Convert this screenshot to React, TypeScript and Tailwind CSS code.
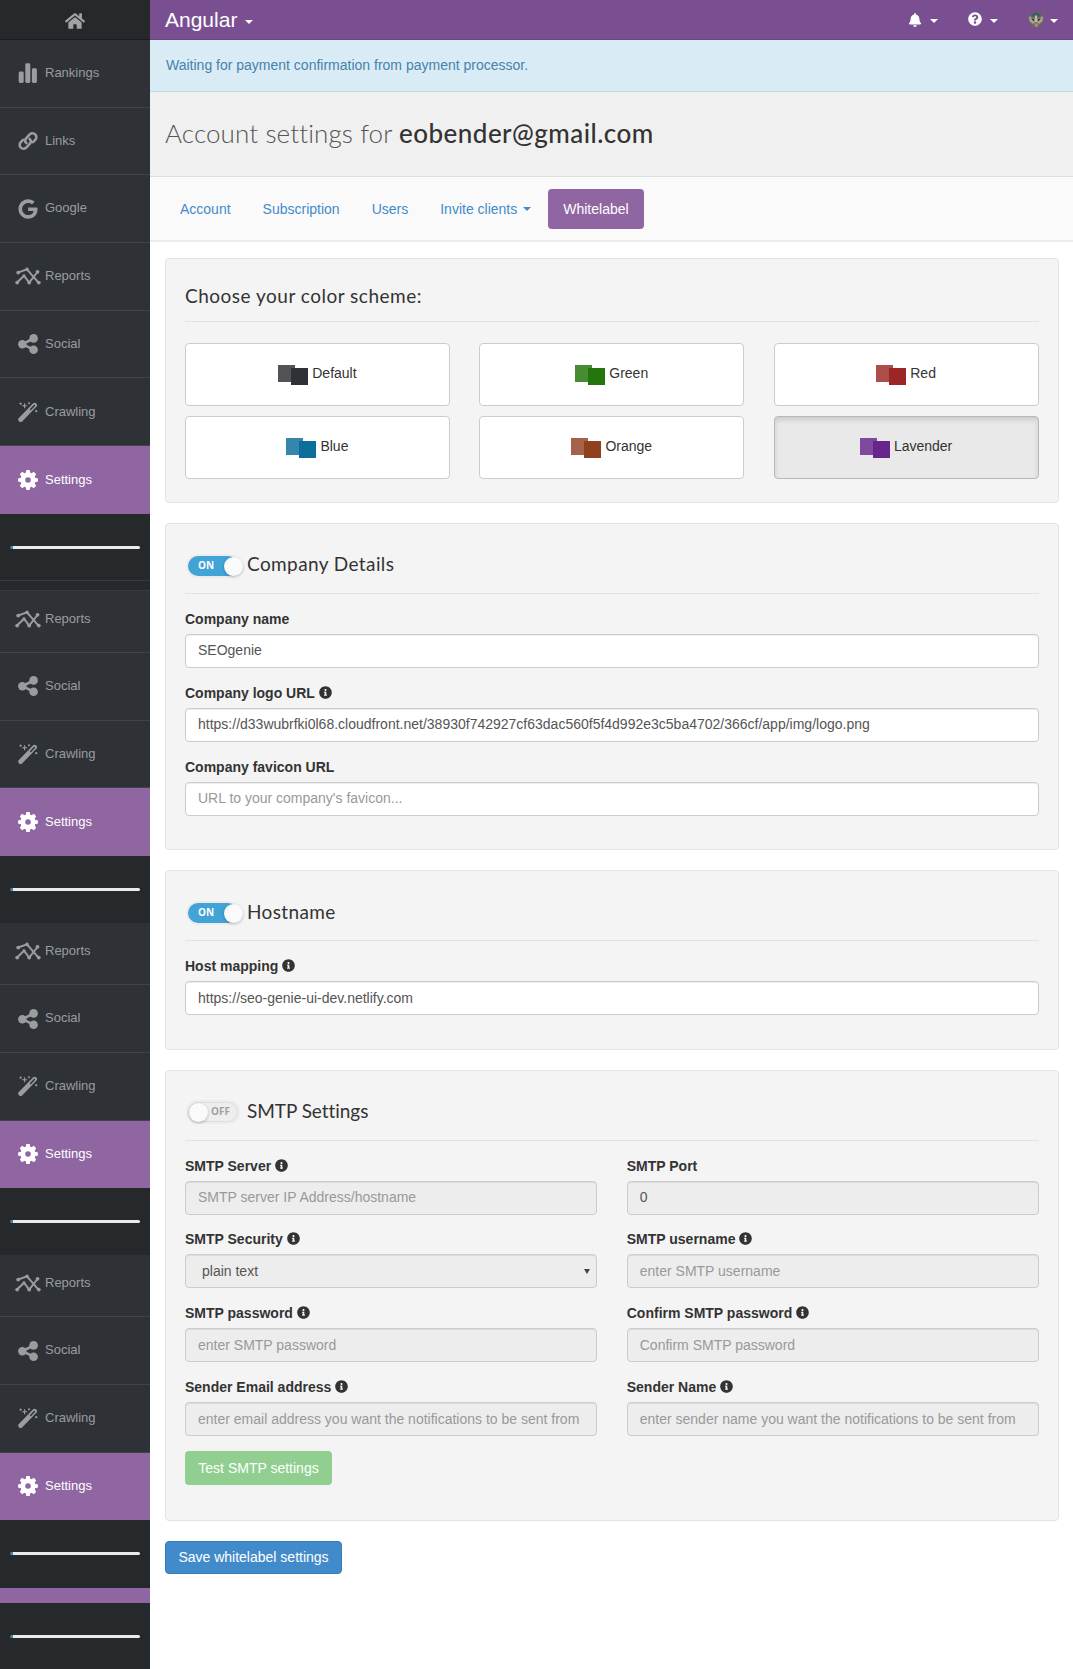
import React from "react";
import { FaHome, FaBell, FaQuestionCircle, FaInfoCircle, FaGoogle } from "react-icons/fa";

const sans = "font-['Liberation_Sans',Arial,sans-serif]";
const head = "font-[Lato,'Open_Sans',sans-serif]";

function Caret({ cls = "" }: { cls?: string }) {
  return <span className={`inline-block h-0 w-0 border-x-4 border-t-4 border-x-transparent border-t-current ${cls}`} />;
}

function RankIcon() {
  return (
    <svg width="20" height="20" viewBox="0 0 20 20" fill="currentColor">
      <rect x="0.7" y="8.5" width="5" height="11.5" rx="1.4" />
      <rect x="7.3" y="0.3" width="5" height="19.7" rx="1.4" />
      <rect x="13.9" y="5.3" width="5" height="14.7" rx="1.4" />
    </svg>
  );
}

function LinkIcon() {
  return (
    <svg width="20" height="20" viewBox="0 0 20 20" fill="none" stroke="currentColor" strokeWidth="2.6" strokeLinecap="round">
      <path d="M8.4 12.1c-1.6-1.5-1.5-3.500-.1-5l3.600-3.900a3.900 3.900 0 0 1 5.500 5.500L15 11.2" />
      <path d="M11.6 7.900c1.600 1.500 1.500 3.500.1 5l-3.600 3.900a3.900 3.900 0 0 1-5.500-5.500L5 8.800" />
    </svg>
  );
}

function ReportIcon() {
  return (
    <svg width="26" height="18" viewBox="0 0 26 18" fill="none" stroke="currentColor" strokeWidth="2">
      <path d="M3 5.5 12 2.4 23.5 15.7M2.3 15.3 9 8.7 14.2 15.5 22.5 5" />
      <g fill="currentColor" stroke="none">
        <circle cx="3.2" cy="5.6" r="1.9" />
        <circle cx="12" cy="2.4" r="1.8" />
        <circle cx="23.8" cy="15.6" r="1.9" />
        <circle cx="2.2" cy="15.6" r="1.9" />
        <circle cx="9" cy="8.9" r="1.6" />
        <circle cx="14.2" cy="15.6" r="1.9" />
        <circle cx="22.5" cy="4.8" r="1.9" />
      </g>
    </svg>
  );
}

function ShareIcon() {
  return (
    <svg width="20" height="20" viewBox="0 0 20 20" fill="currentColor">
      <path d="M4.3 10.2 15.6 4.5M4.3 10.2l11.3 5.5" stroke="currentColor" strokeWidth="2.6" />
      <circle cx="4.3" cy="10.2" r="4.2" />
      <circle cx="15.6" cy="4.4" r="4.3" />
      <circle cx="15.6" cy="15.7" r="4.3" />
    </svg>
  );
}

function WandIcon() {
  return (
    <svg width="20" height="20" viewBox="0 0 20 20" fill="none" stroke="currentColor">
      <path d="M2.6 17.6 16.6 3.2" strokeWidth="4.8" strokeLinecap="round" />
      <path d="M12.6 7.4 16.4 3.5" stroke="#2e3236" strokeWidth="1.5" strokeLinecap="round" />
      <path d="M6.6 1.2v5M4.1 3.7h5M2.6.5v2.2M1.5 1.6h2.2M11 .3v2M10 1.3h2M18.2 8v2.2M17.1 9.1h2.2" strokeWidth="1.1" />
    </svg>
  );
}

const teeth = [0, 45, 90, 135];

function GearIcon() {
  return (
    <svg width="20" height="20" viewBox="-10 -10 20 20" fill="none" stroke="currentColor">
      <circle r="5.1" strokeWidth="4.6" />
      {teeth.map((t) => (
        <g key={t} transform={`rotate(${t})`} fill="currentColor" stroke="none">
          <path d="M-2.5-6.4-1.6-9.9h3.2l.9 3.5zM-2.5 6.4-1.6 9.9h3.2l.9-3.5z" />
        </g>
      ))}
    </svg>
  );
}

const icons: Record<string, React.ReactNode> = {
  Rankings: <RankIcon />,
  Links: <LinkIcon />,
  Google: <FaGoogle size={20} />,
  Reports: <ReportIcon />,
  Social: <ShareIcon />,
  Crawling: <WandIcon />,
  Settings: <GearIcon />,
};

function Item({ name, cls = "h-[67.7px]" }: { name: string; cls?: string }) {
  const on = name === "Settings";
  return (
    <div className={`flex shrink-0 flex-col justify-end overflow-hidden ${cls} ${on ? "bg-[#8f66a1] text-white" : "border-b border-[#404447] bg-[#2e3236] text-[#9a9c9e]"}`}>
      <div className={`flex shrink-0 items-center ${on ? "h-[67.7px]" : "h-[66.7px]"}`}>
        <span className="ml-[14px] flex w-[27px] justify-center">{icons[name]}</span>
        <span className="ml-1 -mt-px text-[13px]">{name}</span>
      </div>
    </div>
  );
}

function Dark({ cls }: { cls: string }) {
  return (
    <div className={`shrink-0 bg-[#25292c] ${cls}`}>
      <div className="mt-[32px] ml-[10px] h-[3px] w-[130px] rounded-sm border-l-[3px] border-[#4a7fa6] bg-[#e8ebed]" />
    </div>
  );
}

function Group({ first }: { first: string }) {
  return (
    <>
      <Item name="Reports" cls={first} />
      <Item name="Social" />
      <Item name="Crawling" />
      <Item name="Settings" />
    </>
  );
}

function Toggle({ on }: { on: boolean }) {
  return (
    <span className="ml-[3px] flex w-[56px] shrink-0">
      <span className={`flex h-5 w-[50px] items-center rounded-full text-[10px] shadow-[0_0_0_2px_#ececec] ${on ? "bg-[#41a3d6] text-white" : "flex-row-reverse border border-[#dedede] bg-[#eeeeee] text-[#a0a0a0]"}`}>
        <span className={`-mt-px text-center font-['Open_Sans',sans-serif] font-bold ${on ? "w-[36px]" : "w-[33px] pr-1"}`}>{on ? "ON" : "OFF"}</span>
        <span className={`h-[19px] w-[19px] shrink-0 rounded-full bg-[#fafafa] shadow-[0_1px_3px_rgba(0,0,0,0.25)] ${on ? "-mr-[5px]" : ""}`} />
      </span>
    </span>
  );
}

function Panel({ title, toggle, cls, bar, track, children }: { title: string; toggle?: boolean; cls: string; bar: string; track: string; children: React.ReactNode }) {
  return (
    <section className={`shrink-0 rounded border border-[#e3e3e3] bg-[#f4f4f4] px-[19px] ${cls}`}>
      <div className={`flex items-center border-b border-[#e2e2e2] ${bar}`}>
        {toggle !== undefined && <span className="mt-[3px] flex"><Toggle on={toggle} /></span>}
        <h2 className={`${head} text-[19px] text-[#333] ${track} ${toggle === undefined ? "" : "ml-[3px]"}`}>{title}</h2>
      </div>
      {children}
    </section>
  );
}

function Field({ label, info, value, ph, disabled, select }: { label: string; info?: boolean; value?: string; ph?: string; disabled?: boolean; select?: boolean }) {
  return (
    <div className="h-[73.9px] min-w-0">
      <div className="flex h-[25px] items-start gap-1 text-sm font-bold text-[#333]">
        <span>{label}</span>
        {info && <FaInfoCircle size={13} className="mt-[3px]" />}
      </div>
      <div className={`flex h-[34px] items-center justify-between rounded border border-[#ccc] pl-3 text-sm whitespace-nowrap shadow-[inset_0_1px_1px_rgba(0,0,0,0.075)] ${disabled ? "bg-[#ededed]" : "bg-white"} ${value ? "text-[#555]" : "text-[#999]"}`}>
        <span className={`-mt-px ${select ? "pl-1" : ""}`}>{value || ph}</span>
        {select && <span className="mr-[6px] border-x-[3px] border-t-[5px] border-x-transparent border-t-[#444]" />}
      </div>
    </div>
  );
}

function Scheme({ name, a, b, on }: { name: string; a: string; b: string; on?: boolean }) {
  return (
    <button className={`flex h-[63px] items-center justify-center rounded border pt-0.5 text-sm text-[#333] ${on ? "border-[#b8b8b8] bg-[#e9e9e9] shadow-[inset_0_3px_5px_rgba(0,0,0,0.125)]" : "border-[#ccc] bg-white"}`}>
      <span className="mr-1 flex">
        <span className={`h-[17px] w-[17px] ${a}`} />
        <span className={`-ml-1 mt-[3px] h-[17px] w-[17px] ${b}`} />
      </span>
      <span className="-mt-1">{name}</span>
    </button>
  );
}

function Avatar() {
  return (
    <svg width="16" height="17" viewBox="0 0 16 17">
      <ellipse cx="8" cy="8.3" rx="7.8" ry="7.8" fill="#6d675f" />
      <path d="M2.5 3.5 8 .8l5.5 2.7-1.5 2H4z" fill="#3e5f66" />
      <path d="M1 5l5 3 1 3-2 2-3.5-3zM15 5l-5 3-1 3 2 2 3.5-3z" fill="#a9a799" />
      <path d="M3 7l3.500 1.500L5.500 10.500zM13 7l-3.500 1.500 1 2z" fill="#33302c" />
      <path d="M7 4.5h2l.4 5L8 12 6.6 9.5z" fill="#bfbcae" />
      <path d="M6 12.5h4.500L9.500 16h-2z" fill="#a39177" />
    </svg>
  );
}

export default function App() {
  return (
    <div className={`flex h-[1669px] w-[1073px] overflow-hidden bg-white ${sans}`}>
      <aside className="flex w-[150px] shrink-0 flex-col bg-[#25292c]">
        <div className="flex h-10 shrink-0 items-center justify-center border-b border-[#1b1e20] text-[#a0a2a4]"><FaHome size={20} className="mt-0.5" /></div>
        {["Rankings", "Links", "Google", "Reports", "Social", "Crawling", "Settings"].map((n) => <Item key={n} name={n} />)}
        <Dark cls="h-[67.6px] border-b border-[#383c3f]" />
        <div className="h-[10px] shrink-0 border-b border-[#383c3f]" />
        <Group first="h-[61.7px]" />
        <Dark cls="h-[67px]" />
        <Group first="h-[62px]" />
        <Dark cls="h-[67px]" />
        <Group first="h-[62px]" />
        <Dark cls="h-[67.6px]" />
        <div className="h-[15px] shrink-0 bg-[#8f66a1]" />
        <Dark cls="h-[68px]" />
      </aside>
      <div className="flex min-w-0 flex-1 flex-col">
        <header className="flex h-10 shrink-0 items-center border-b border-[#6d4583] bg-[#7a4f92] pl-[15px] pr-[15px] text-white">
          <span className="text-[21px]">Angular</span>
          <Caret cls="ml-2 mt-1" />
          <span className="ml-auto flex items-center"><FaBell size={14} /><Caret cls="ml-2 mt-0.5" /></span>
          <span className="ml-[29.5px] flex items-center"><FaQuestionCircle size={14} className="-mt-0.5" /><Caret cls="ml-[8.5px] mt-0.5" /></span>
          <span className="ml-[30px] flex items-center"><Avatar /><Caret cls="ml-[6px] mt-0.5" /></span>
        </header>
        <div className="flex h-[52px] shrink-0 items-center border-b border-[#bcdfe6] bg-[#d9ecf5] pb-px pl-4 text-sm text-[#4682ad]">Waiting for payment confirmation from payment processor.</div>
        <div className="flex h-[85px] shrink-0 items-center border-b border-[#ddd] bg-[#f0f0f0] pb-0.5 pl-[15px]">
          <h1 className={`${head} whitespace-nowrap text-[26px] font-light tracking-[0.1px] text-[#555]`}>Account settings for <b className="font-medium tracking-[0.45px] text-[#333]">eobender@gmail.com</b></h1>
        </div>
        <nav className="flex h-[65px] shrink-0 items-center border-b-2 border-[#ededed] bg-[#fafafa] pl-[15px] text-sm text-[#428bca]">
          <a className="px-[15px]">Account</a>
          <a className="ml-0.5 px-[15px]">Subscription</a>
          <a className="ml-0.5 px-[15px]">Users</a>
          <a className="ml-0.5 flex items-center px-[15px]">Invite clients<Caret cls="ml-1.5" /></a>
          <a className="ml-0.5 flex h-10 items-center rounded bg-[#8f66a1] px-[15px] text-white">Whitelabel</a>
        </nav>
        <main className="flex w-full flex-col pl-[15px] pr-[14.5px] pt-4">
          <Panel title="Choose your color scheme:" bar="h-[63px] pt-[12px]" track="tracking-[0.5px]" cls="mb-5 h-[245px]">
            <div className="mt-[20.5px] grid grid-cols-3 gap-x-[29.5px] gap-y-[10px]">
              <Scheme name="Default" a="bg-[#515356]" b="bg-[#2e3236]" />
              <Scheme name="Green" a="bg-[#478c33]" b="bg-[#24750c]" />
              <Scheme name="Red" a="bg-[#ae4c4a]" b="bg-[#9b2625]" />
              <Scheme name="Blue" a="bg-[#3486ab]" b="bg-[#0b6d9a]" />
              <Scheme name="Orange" a="bg-[#a6614a]" b="bg-[#91401f]" />
              <Scheme name="Lavender" a="bg-[#8049a0]" b="bg-[#68258c]" on />
            </div>
          </Panel>
          <Panel title="Company Details" toggle={true} bar="h-[70px] pt-[12px]" track="tracking-[0.4px]" cls="mb-5 h-[327.4px]">
            <div className="mt-[14.8px]">
              <Field label="Company name" value="SEOgenie" />
              <Field label="Company logo URL" info value="https://d33wubrfki0l68.cloudfront.net/38930f742927cf63dac560f5f4d992e3c5ba4702/366cf/app/img/logo.png" />
              <Field label="Company favicon URL" ph="URL to your company's favicon..." />
            </div>
          </Panel>
          <Panel title="Hostname" toggle={true} bar="h-[70px] pt-[12px]" track="tracking-[0.35px]" cls="mb-5 h-[179.8px]">
            <div className="mt-[14.8px]"><Field label="Host mapping" info value="https://seo-genie-ui-dev.netlify.com" /></div>
          </Panel>
          <Panel title="SMTP Settings" toggle={false} bar="h-[69.5px] pt-[11px]" track="tracking-[-0.05px]" cls="mb-5 h-[450.5px]">
            <div className="mt-[14.9px] grid grid-cols-2 gap-x-[30px]">
              <Field label="SMTP Server" info ph="SMTP server IP Address/hostname" disabled />
              <Field label="SMTP Port" value="0" disabled />
              <Field label="SMTP Security" info value="plain text" disabled select />
              <Field label="SMTP username" info ph="enter SMTP username" disabled />
              <Field label="SMTP password" info ph="enter SMTP password" disabled />
              <Field label="Confirm SMTP password" info ph="Confirm SMTP password" disabled />
              <Field label="Sender Email address" info ph="enter email address you want the notifications to be sent from" disabled />
              <Field label="Sender Name" info ph="enter sender name you want the notifications to be sent from" disabled />
            </div>
            <button className="flex h-[34px] w-[147px] items-center justify-center rounded bg-[#91cf91] text-sm text-white">Test SMTP settings</button>
          </Panel>
          <button className="flex h-[33.5px] w-[177px] items-center justify-center rounded border border-[#357ebd] bg-[#428bca] text-sm text-white">Save whitelabel settings</button>
        </main>
      </div>
    </div>
  );
}
